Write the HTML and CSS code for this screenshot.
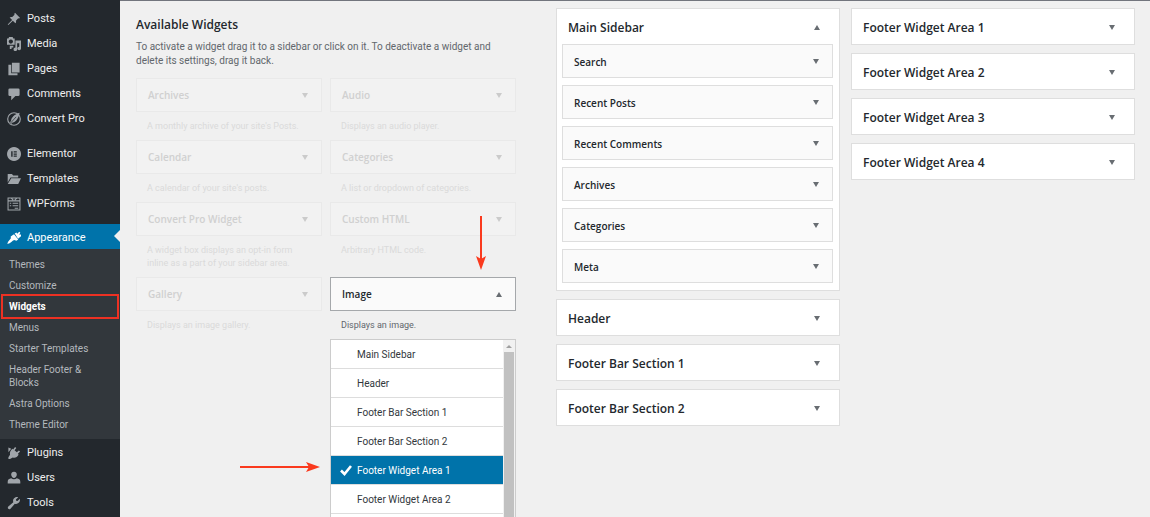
FILE: index.html
```html
<!DOCTYPE html>
<html lang="en">
<head>
<meta charset="utf-8">
<title>Widgets</title>
<link rel="stylesheet" href="styles.css">
</head>
<body>
<div class="app">
  <nav class="menu" aria-label="Admin menu">
    <div class="menu-group">
      <a class="menu-item" href="#"><svg class="icon" viewBox="0 0 20 20"><path d="M10.400 3l1-1.800 7.300 7.200-1.800 1-.9-.3-3.200 3.300c.4 1.600.2 2.800-.8 3.700L8.300 12.500 2 18.600l-1-.9 6.300-6.200L3.800 8c1-.9 2.200-1.100 3.700-.7L10.800 4z"/></svg>Posts</a>
      <a class="menu-item" href="#"><svg class="icon" viewBox="0 0 20 20"><path fill-rule="evenodd" d="M0 2h2l1-2h5l1 2h2v9H0zM5.500 3.500a3 3 0 1 0 .01 0zM12 5h8v11.500a2.600 2.600 0 1 1-2.500-2.600V9H14.500v8.500a2.600 2.600 0 1 1-2.500-2.600zM4 12.500h5V15H6.500v2H4z"/></svg>Media</a>
      <a class="menu-item" href="#"><svg class="icon" viewBox="0 0 20 20"><path d="M7 1h11v14H7zM2 4h4v12h9v3H2z"/></svg>Pages</a>
      <a class="menu-item" href="#"><svg class="icon" viewBox="0 0 20 20"><path d="M4 2h12q2 0 2 2v7q0 2-2 2h-4l-6 6v-6H4q-2 0-2-2V4q0-2 2-2z"/></svg>Comments</a>
      <a class="menu-item" href="#"><svg class="icon" viewBox="0 0 20 20"><circle cx="10" cy="10" r="9" fill="none" stroke="currentColor" stroke-width="1.600"/><path d="M18 1C11 3 6 8 6 12l-3 5 2 1 3-3c5-1 9-7 10-14z"/><path d="M4 17L13 7" stroke="#23282d" stroke-width="1"/></svg>Convert Pro</a>
    </div>
    <div class="menu-group">
      <a class="menu-item" href="#"><svg class="icon" viewBox="0 0 20 20"><path fill-rule="evenodd" d="M10 0a10 10 0 1 0 .01 0zM6 6h2v8H6zM9.500 6H14v1.700H9.500zM9.500 9.200H14v1.700H9.500zM9.500 12.300H14V14H9.500z"/></svg>Elementor</a>
      <a class="menu-item" href="#"><svg class="icon" viewBox="0 0 20 20"><path d="M1 3h6l2 2h7v3H5l-4 7zM6 9h14l-4 8H1z"/></svg>Templates</a>
      <a class="menu-item" href="#"><svg class="icon" viewBox="0 0 20 20"><path d="M1.500 1.500h17v17h-17zM1.500 5.500h17M6 1.500l3 3M14 1.500l-3 3M4 9h2M8 9h8M4 12.500h2M8 12.500h8M11 16h5" fill="none" stroke="currentColor" stroke-width="1.500"/></svg>WPForms</a>
    </div>
    <a class="menu-item menu-item-current" href="#"><svg class="icon" viewBox="0 0 20 20"><path d="M11 3.500l2.500-1.500 1 2L17.500 1l1.500 1.300-1.500 3 2.500-.3v2.500L15.800 11zM10 4.500l6 7.500-2.500 2-3.300-1.200C7.500 13.500 5.500 17.500.5 18.500c.7-4 3.500-5 5-8L5.300 8z"/></svg>Appearance</a>
    <div class="submenu">
      <a class="submenu-item" href="#">Themes</a>
      <a class="submenu-item" href="#">Customize</a>
      <a class="submenu-item submenu-item-current" href="#">Widgets</a>
      <a class="submenu-item" href="#">Menus</a>
      <a class="submenu-item" href="#">Starter Templates</a>
      <a class="submenu-item" href="#">Header Footer &amp; Blocks</a>
      <a class="submenu-item" href="#">Astra Options</a>
      <a class="submenu-item" href="#">Theme Editor</a>
    </div>
    <a class="menu-item" href="#"><svg class="icon" viewBox="0 0 20 20"><path d="M11.500 1.500L13.300 3l-2.500 3 3.200 3 3-2.700 1.700 1.700-3.100 3.100 1 1.300c-2 3.500-5 5-8.300 4l-4 2.300H2v-2.500l2.300-3.700C3.600 9.500 5 6 7.800 4.100l1 1zM2 2l4 2-4 5z"/></svg>Plugins</a>
    <a class="menu-item" href="#"><svg class="icon" viewBox="0 0 20 20"><path d="M10 1c3 0 4.300 2 4 4.500S12 10 10 10 6.300 8 6 5.500 7 1 10 1zM6 10.500c2 1.700 6 1.700 8 0 3 .5 5 2 5 5V18H1v-2.500c0-3 2-4.500 5-5z"/></svg>Users</a>
    <a class="menu-item" href="#"><svg class="icon" viewBox="0 0 20 20"><path d="M16.700 9.800c-1.500 1.500-3.500 1.900-5.500 1.300L5 18.200c-1 1-2.300 1-3.200.1s-.8-2.200.1-3.200L9 8.900c-.7-2-.3-4.100 1.200-5.600S14 1.200 16 1.700l-3.300 3.200.4 2 2 .4 3.200-3.300c.6 2.100 0 4.200-1.600 5.800z"/></svg>Tools</a>
  </nav>

  <main class="content">
    <section class="available">
      <h2 class="title">Available Widgets</h2>
      <p class="intro">To activate a widget drag it to a sidebar or click on it. To deactivate a widget and delete its settings, drag it back.</p>
      <div class="widget-grid">
        <div class="widget faded"><button class="bar">Archives<span class="caret"></span></button><p class="desc">A monthly archive of your site's Posts.</p></div>
        <div class="widget faded"><button class="bar">Audio<span class="caret"></span></button><p class="desc">Displays an audio player.</p></div>
        <div class="widget faded"><button class="bar">Calendar<span class="caret"></span></button><p class="desc">A calendar of your site's posts.</p></div>
        <div class="widget faded"><button class="bar">Categories<span class="caret"></span></button><p class="desc">A list or dropdown of categories.</p></div>
        <div class="widget faded"><button class="bar">Convert Pro Widget<span class="caret"></span></button><p class="desc">A widget box displays an opt-in form inline as a part of your sidebar area.</p></div>
        <div class="widget faded"><button class="bar">Custom HTML<span class="caret"></span></button><p class="desc">Arbitrary HTML code.</p>
          <svg class="arrow-down" viewBox="0 0 12 54"><path d="M6 0V46" stroke="#fa3a1e" stroke-width="2"/><path d="M1 40l5 3 5-3-5 14z" fill="#fa3a1e"/></svg>
        </div>
        <div class="widget faded"><button class="bar">Gallery<span class="caret"></span></button><p class="desc">Displays an image gallery.</p></div>
        <div class="widget widget-open"><button class="bar" aria-expanded="true">Image<span class="caret caret-up"></span></button><p class="desc">Displays an image.</p>
          <div class="chooser">
            <div class="chooser-list">
              <button class="choice">Main Sidebar</button>
              <button class="choice">Header</button>
              <button class="choice">Footer Bar Section 1</button>
              <button class="choice">Footer Bar Section 2</button>
              <button class="choice choice-selected"><svg class="check" viewBox="0 0 12 12"><path d="M1 6.500l3.500 3.500L11 2" fill="none" stroke="#fff" stroke-width="2.600"/></svg>Footer Widget Area 1</button>
              <button class="choice">Footer Widget Area 2</button>
            </div>
            <div class="scrollbar"><span class="caret caret-up scroll-up"></span><div class="thumb"></div></div>
            <svg class="arrow-right" viewBox="0 0 80 12"><path d="M0 6H72" stroke="#fa3a1e" stroke-width="2"/><path d="M66 1l3 5-3 5 14-5z" fill="#fa3a1e"/></svg>
          </div>
        </div>
      </div>
    </section>

    <div class="areas">
      <div class="area-column">
        <section class="area area-open">
          <button class="area-head" aria-expanded="true">Main Sidebar<span class="caret caret-up"></span></button>
          <div class="area-widgets">
            <button class="bar">Search<span class="caret"></span></button>
            <button class="bar">Recent Posts<span class="caret"></span></button>
            <button class="bar">Recent Comments<span class="caret"></span></button>
            <button class="bar">Archives<span class="caret"></span></button>
            <button class="bar">Categories<span class="caret"></span></button>
            <button class="bar">Meta<span class="caret"></span></button>
          </div>
        </section>
        <section class="area"><button class="area-head">Header<span class="caret"></span></button></section>
        <section class="area"><button class="area-head">Footer Bar Section 1<span class="caret"></span></button></section>
        <section class="area"><button class="area-head">Footer Bar Section 2<span class="caret"></span></button></section>
      </div>
      <div class="area-column">
        <section class="area"><button class="area-head">Footer Widget Area 1<span class="caret"></span></button></section>
        <section class="area"><button class="area-head">Footer Widget Area 2<span class="caret"></span></button></section>
        <section class="area"><button class="area-head">Footer Widget Area 3<span class="caret"></span></button></section>
        <section class="area"><button class="area-head">Footer Widget Area 4<span class="caret"></span></button></section>
      </div>
    </div>
  </main>
</div>
</body>
</html>
```
FILE: styles.css
```css
* { box-sizing: border-box; }

body {
  margin: 0;
  background: #f0f0f0;
  color: #23282d;
  font-family: Roboto, "Open Sans", sans-serif;
  font-size: 11px;
}

h2, p { margin: 0; }

a { text-decoration: none; }

button {
  margin: 0;
  padding: 0;
  border: 0;
  background: none;
  color: inherit;
  font: inherit;
  text-align: left;
}

.app {
  display: flex;
  height: 100vh;
  overflow: hidden;
}

/* Admin menu */
.menu {
  flex: 0 0 120px;
  padding-top: 5px;
  background: #23282d;
}

.menu-group { margin-bottom: 10px; }
.menu-group + .menu-group { margin-bottom: 9px; }

.menu-item {
  display: flex;
  align-items: center;
  gap: 6px;
  height: 25px;
  padding: 2px 0 0 7px;
  color: #eee;
  font-size: 11px;
}

.icon {
  width: 14px;
  height: 14px;
  flex: none;
  color: #a0a5aa;
  fill: currentColor;
}

.menu-item-current {
  position: relative;
  background: #0073aa;
  color: #fff;
}

.menu-item-current .icon { color: #fff; }

.menu-item-current::after {
  content: "";
  position: absolute;
  top: 6px;
  right: 0;
  border: 6px solid transparent;
  border-left: 0;
  border-right-color: #f0f0f0;
}

.submenu {
  padding: 5px 0 4px;
  background: #32373c;
}

.submenu-item {
  display: block;
  padding: 4px 24px 4px 9px;
  color: #b4b9be;
  font-size: 10px;
  line-height: 13px;
}

.submenu-item-current {
  margin: 0 3px;
  padding-left: 6px;
  outline: 2px solid #ed3123;
  color: #fff;
  font-weight: 700;
}

/* Content */
.content {
  flex: 1;
  display: grid;
  grid-template-columns: 380fr 579fr;
  gap: 40px;
  align-items: start;
  padding: 7px 15px 0 16px;
  border-top: 1px solid #72757d;
}

.title {
  padding-top: 7px;
  font-family: "Open Sans", sans-serif;
  font-size: 12px;
  font-weight: 600;
  line-height: 20px;
}

.intro {
  margin: 5px 0 10px;
  padding-right: 10px;
  color: #62676c;
  font-size: 10px;
  line-height: 14px;
}

.widget-grid {
  display: grid;
  grid-template-columns: 1fr 1fr;
  column-gap: 8px;
}

.widget { position: relative; }

.bar {
  display: flex;
  align-items: center;
  justify-content: space-between;
  width: 100%;
  height: 34px;
  padding: 1px 13px 0 11px;
  border: 1px solid #dedede;
  background: #fafafa;
  font-family: "Open Sans", sans-serif;
  font-size: 10px;
  font-weight: 600;
}

.widget .bar { padding-top: 0; }

.desc {
  padding: 8px 20px 7px 11px;
  color: #62676c;
  font-size: 9px;
  line-height: 13px;
}

.faded .bar {
  border-color: #e9e9e9;
  background: #f2f2f2;
  color: #d0d0d0;
}

.faded .desc { color: #dadada; }
.faded .caret { color: #cbcbcb; }

.widget-open .bar { border-color: #a5a8ab; }

.caret {
  border: 3px solid transparent;
  border-top: 5px solid currentColor;
  border-bottom: 0;
  color: #686d72;
}

.caret-up {
  border-top: 0;
  border-bottom: 5px solid currentColor;
}

.chooser {
  position: relative;
  display: flex;
  min-height: 200px;
  border: 1px solid #ccc;
  background: #fff;
}

.chooser-list { flex: 1; }

.choice {
  position: relative;
  display: block;
  width: 100%;
  height: 29px;
  padding-left: 26px;
  border-bottom: 1px solid #ddd;
  color: #32373c;
  font-size: 10px;
}

.choice-selected {
  background: #0073aa;
  color: #fff;
}

.check {
  position: absolute;
  top: 8px;
  left: 9px;
  width: 12px;
  height: 12px;
}

.scrollbar {
  display: flex;
  flex-direction: column;
  align-items: center;
  width: 12px;
  padding-top: 5px;
  background: #f1f1f1;
}

.scroll-up {
  border-bottom-width: 3px;
  color: #a0a0a0;
}

.thumb {
  flex: 1;
  width: 10px;
  margin-top: 4px;
  background: #c1c1c1;
}

.arrow-down {
  position: absolute;
  top: 14px;
  right: 29px;
  width: 12px;
  height: 54px;
}

.arrow-right {
  position: absolute;
  top: 121px;
  right: 195px;
  width: 80px;
  height: 12px;
}

/* Sidebar areas */
.areas {
  display: grid;
  grid-template-columns: 1fr 1fr;
  gap: 11px;
  align-items: start;
}

.area-column {
  display: grid;
  gap: 8px;
}

.area {
  border: 1px solid #dedede;
  background: #fff;
}

.area-head {
  display: flex;
  align-items: center;
  justify-content: space-between;
  width: 100%;
  height: 35px;
  padding: 2px 19px 0 11px;
  font-family: "Open Sans", sans-serif;
  font-size: 12px;
  font-weight: 600;
}

.area-widgets {
  display: grid;
  gap: 7px;
  padding: 0 6px 7px 5px;
}
```
